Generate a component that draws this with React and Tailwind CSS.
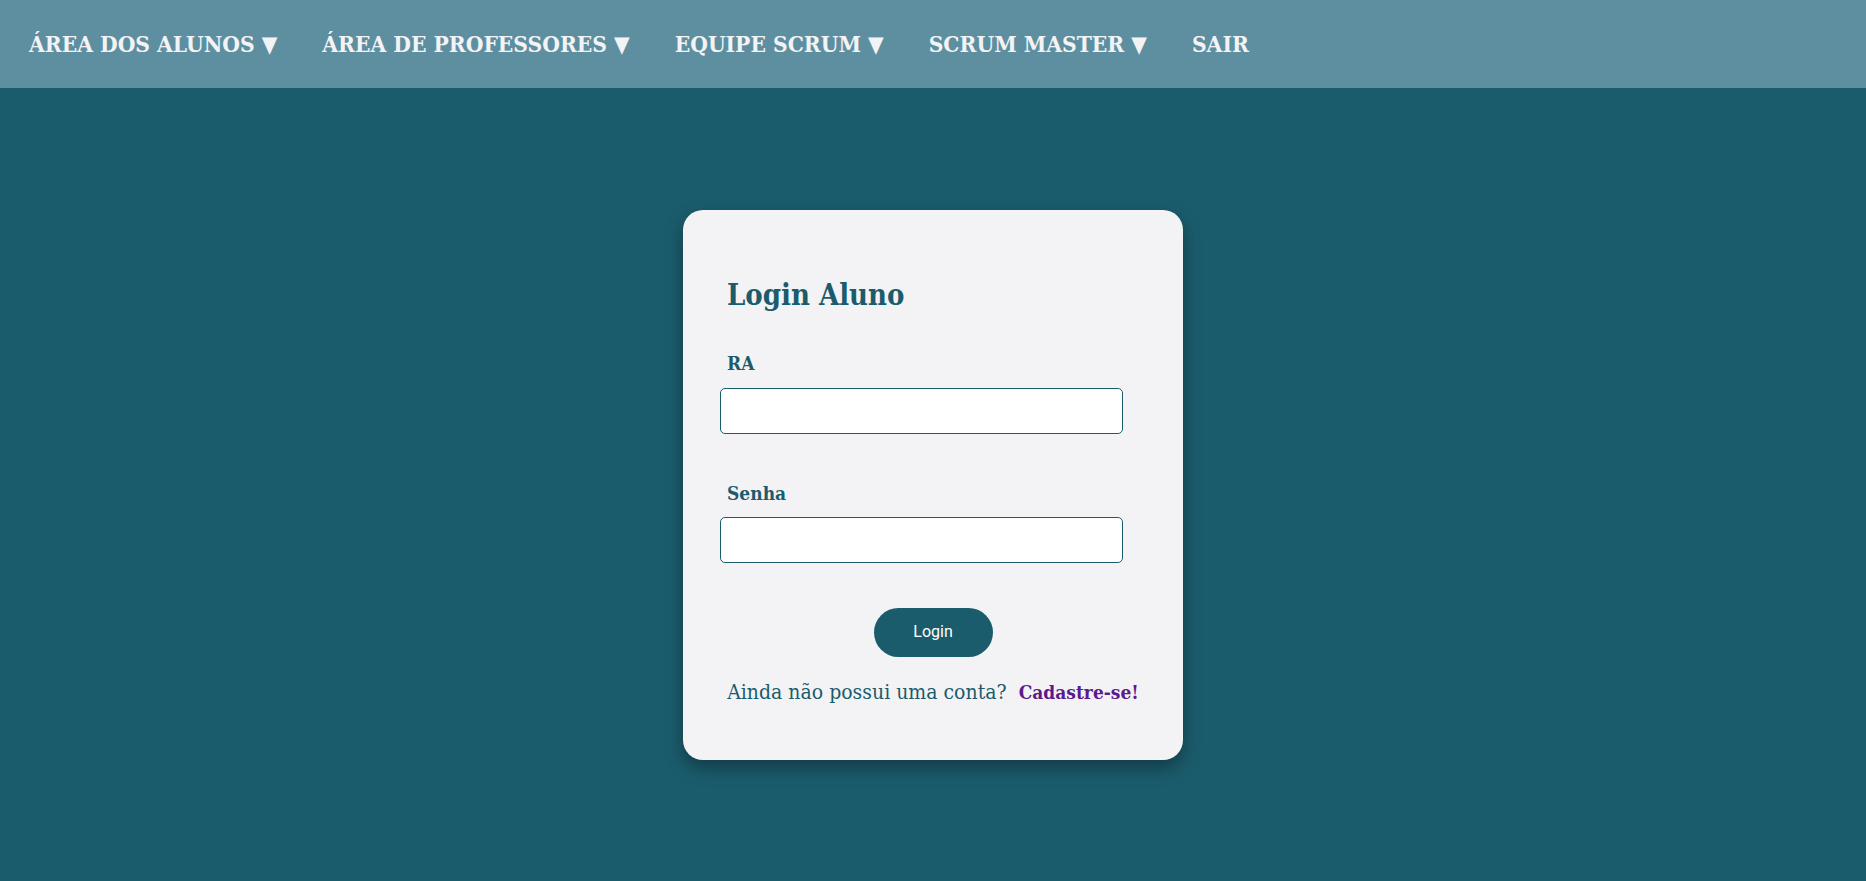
export default function App() {
  const menu = ['ÁREA DOS ALUNOS ▼', 'ÁREA DE PROFESSORES ▼', 'EQUIPE SCRUM ▼', 'SCRUM MASTER ▼', 'SAIR'];

  return (
    <div className="min-h-screen flex flex-col bg-[#1b5c6c] font-['DejaVu_Serif_Condensed','DejaVu_Serif',serif] font-stretch-condensed">
      {/* top nav */}
      <nav className="h-[88px] shrink-0 bg-[#5e8fa0] flex items-center pl-[29px] gap-[45px]">
        {menu.map((item) => (
          <a key={item} href="#" className="text-[22.6px] font-bold text-[#f3f3f5] whitespace-nowrap leading-none">
            {item}
          </a>
        ))}
      </nav>

      <main className="flex-1 flex items-center justify-center">
        <div className="w-[500px] bg-[#f3f3f5] rounded-[20px] shadow-[0_8px_18px_rgba(0,0,0,0.35)] pt-[65px] pb-[54px] pl-[37px] flex flex-col">
          <h1 className="ml-[7px] text-[29px] leading-[40px] font-bold text-[#1b5c6c]">Login Aluno</h1>

          <label className="ml-[7px] mt-[36px] text-[19px] leading-[24px] font-bold text-[#1b5c6c]">RA</label>
          <input type="text" className="mt-[13px] w-[403px] h-[46px] bg-white border border-[#1b5c6c] rounded-[5px] px-3 outline-none" />

          <label className="ml-[7px] mt-[47px] text-[19px] leading-[24px] font-bold text-[#1b5c6c]">Senha</label>
          <input type="password" className="mt-[12px] w-[403px] h-[46px] bg-white border border-[#1b5c6c] rounded-[5px] px-3 outline-none" />

          <div className="-ml-[37px] mt-[45px] flex justify-center">
            <button className="w-[119px] h-[49px] rounded-full bg-[#1b5c6c] text-white text-[16px] font-['Roboto',sans-serif] font-stretch-normal">
              Login
            </button>
          </div>

          <p className="-ml-[37px] mt-[21px] text-center text-[21px] leading-[28px] text-[#1b5c6c]">
            Ainda não possui uma conta?{' '}
            <a href="#" className="ml-[6px] text-[19px] font-bold text-[#5c1a8c]">Cadastre-se!</a>
          </p>
        </div>
      </main>
    </div>
  );
}
